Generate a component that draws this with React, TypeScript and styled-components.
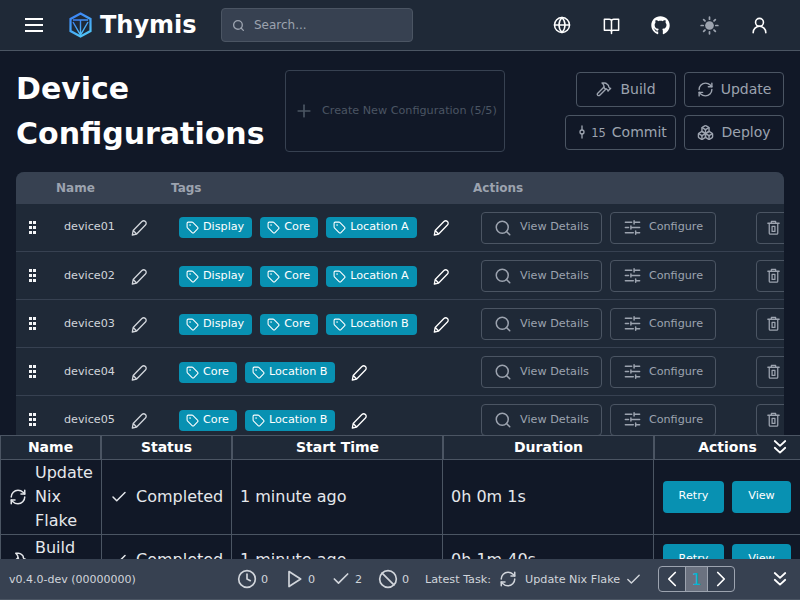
import React from 'react';
import styled, { createGlobalStyle } from 'styled-components';
import { Globe, UserRound, Hammer, RefreshCw, Boxes, GitCommitVertical, Tag, Search, Plus, Check, Clock, Ban, ChevronLeft, ChevronRight } from 'lucide-react';
import { FaGithub } from 'react-icons/fa';

const Global = createGlobalStyle`
  html, body { margin: 0; height: 100%; background: #111827; overflow: hidden; }
  * { box-sizing: border-box; }
  body { font-family: "DejaVu Sans", sans-serif; color: #fff; }
`;
const Page = styled.div`height: 600px; display: flex; flex-direction: column; overflow: hidden;`;
const Navbar = styled.header`
  height: 51px; flex: none; background: #1f2937; border-bottom: 1px solid #4b5563;
  display: flex; align-items: center; padding-left: 25px; padding-right: 31px;
`;
const Burger = styled.div`
  width: 18px; height: 14px; display: flex; flex-direction: column; justify-content: space-between; margin-right: 26px;
  span { height: 2px; background: #fff; }
`;
const Brand = styled.div`display: flex; align-items: center; gap: 8px; font-size: 24px; font-weight: 700; width: 152px;`;
const SearchBox = styled.div`
  width: 192px; height: 34px; background: #374151; border: 1px solid #4b5563; border-radius: 4px;
  display: flex; align-items: center; padding-left: 10px; gap: 9px; color: #9ca3af; font-size: 12px;
`;
const NavIcons = styled.div`margin-left: auto; display: flex; align-items: center; gap: 29.25px;`;
const NavIcon = styled.span<{ $muted?: boolean }>`display: flex; width: 20px; justify-content: center; color: ${p => p.$muted ? '#9ca3af' : '#fff'};`;
const Main = styled.main`flex: 1; min-height: 0; overflow: hidden; padding: 19px 16px 0;`;
const Head = styled.div`display: flex; align-items: flex-start; justify-content: space-between; margin-bottom: 20px; height: 82px;`;
const Title = styled.h1`margin: -4px 20px 0 0; font-size: 30px; line-height: 45px; font-weight: 700; width: 249px;`;
const CreateBox = styled.div`
  width: 220px; height: 82px; border: 1px solid #374151; border-radius: 4px; display: flex; align-items: center;
  padding-left: 8px; gap: 8px; color: #4b5563; font-size: 11.2px; white-space: nowrap; margin-right: auto;
`;
const CreateLabel = styled.span`padding-bottom: 2px;`;
const ActionGrid = styled.div`display: flex; flex-direction: column; gap: 8px; align-items: flex-end; padding-top: 2px;`;
const ActionRow = styled.div`display: flex; gap: 8px;`;
const OutlineBtn = styled.div<{ $w: number; $gap?: number }>`
  width: ${p => p.$w}px; height: 35px; border: 1px solid #4b5563; border-radius: 4px; display: flex; align-items: center; justify-content: center;
  gap: ${p => p.$gap ?? 8}px; color: #9ca3af; font-size: 14px; padding-bottom: 1px;
`;
const CommitCount = styled.span`font-size: 11.5px; margin-left: -7px; margin-right: -2px; padding-top: 2px;`;
const Table = styled.div`border-radius: 8px 8px 0 0; overflow: hidden; background: #1f2937;`;
const columns = '32px 115px 302px 1fr';
const HeaderRow = styled.div`
  display: grid; grid-template-columns: ${columns}; height: 32px; background: #374151; color: #9ca3af; font-size: 12px; font-weight: 700; align-items: center;
  & > span { padding-left: 8px; }
`;
const Row = styled.div`
  display: grid; grid-template-columns: ${columns}; height: 48px; border-bottom: 1px solid #374151; align-items: center;
`;
const Grip = styled.div`
  display: grid; grid-template-columns: 2.5px 2.5px; grid-template-rows: repeat(3, 2.5px); column-gap: 1.5px; row-gap: 2.5px; margin-left: 13px;
  i { background: #f3f4f6; display: block; }
`;
const Lifted = styled.span`padding-bottom: 2px;`;
const NameCell = styled.div<{ $first: boolean }>`
  display: flex; align-items: center; padding-left: 16px; padding-top: ${p => p.$first ? 0 : 2}px; font-size: 11.2px; color: #d1d5db; gap: 14px;
`;
const TagCell = styled.div<{ $first: boolean }>`
  display: flex; align-items: center; padding-left: 16px; padding-top: ${p => p.$first ? 0 : 2}px; gap: 8px;
`;
const TagChip = styled.span`
  height: 21px; background: #0891b2; border-radius: 4px; display: inline-flex; align-items: center; padding: 0 8px 0 7px; gap: 4px; font-size: 11.2px; color: #fff; white-space: nowrap;
`;
const EditBtn = styled.span`display: flex; color: #fff; margin-left: 6px;`;
const RowActions = styled.div`display: flex; align-items: center; padding-left: 16px; gap: 8px;`;
const RowBtn = styled.div<{ $w: number; $gap?: number }>`
  flex: none; width: ${p => p.$w}px; height: 32px; border: 1px solid #4b5563; border-radius: 4px; display: flex; align-items: center; justify-content: center;
  gap: ${p => p.$gap ?? 8}px; color: #9ca3af; font-size: 11.2px; white-space: nowrap;
`;
const BtnLabel = styled.span<{ $first: boolean }>`padding-bottom: ${p => p.$first ? 2 : 0}px;`;
const TrashBtn = styled(RowBtn)`margin-left: 32px;`;
const Tasks = styled.section`flex: none; height: 124px; overflow: hidden; background: #111827; border-top: 1px solid #4b5563;`;
const TaskHead = styled.div`
  display: grid; grid-template-columns: 102px 131px 211px 211px 145px; height: 24px; background: #1f2937; border-bottom: 1px solid #4b5563;
`;
const TaskHeadCell = styled.div`
  position: relative; display: flex; align-items: center; justify-content: center; font-size: 14px; font-weight: 700; border-right: 2px solid #4b5563; padding-bottom: 2px;
  &:first-child { border-left: 1px solid #4b5563; }
  &:last-child { border-right: none; }
`;
const Collapse = styled.span`position: absolute; right: 11px; top: 2px; display: flex; color: #fff;`;
const TaskRow = styled.div`display: grid; grid-template-columns: 102px 130px 211px 211px 146px; border-bottom: 1px solid #4b5563;`;
const TaskCell = styled.div`
  display: flex; align-items: center; border-right: 1px solid #4b5563; padding: 1px 8px; font-size: 16px; line-height: 24px; color: #e5e7eb; gap: 8px;
  &:first-child { border-left: 1px solid #4b5563; }
  &:last-child { border-right: none; padding-left: 9px; }
  & > svg { flex: none; }
`;
const TaskBtn = styled.div<{ $w: number }>`
  width: ${p => p.$w}px; height: 32px; background: #0891b2; border-radius: 4px; display: flex; align-items: center; justify-content: center; font-size: 11.2px; color: #fff; padding-bottom: 2px;
`;
const BtnRow = styled.div`display: flex; gap: 8px;`;
const StatusBar = styled.footer`
  flex: none; height: 41px; background: #374151; display: flex; align-items: center; padding-left: 9px; font-size: 11.2px; color: #d1d5db; border-bottom: 1px solid #4b5563;
  & svg { flex: none; }
`;
const Version = styled.span`width: 228px; font-size: 11px;`;
const Stat = styled.span<{ $w: number }>`display: flex; align-items: center; gap: 4px; width: ${p => p.$w}px; font-size: 11.2px; color: #d1d5db;`;
const Latest = styled.span`display: flex; align-items: center; gap: 8px; margin-left: 10px;`;
const LatestCheck = styled.span`display: flex; margin-left: -3px;`;
const Pager = styled.div`
  margin-left: 16px; display: flex; height: 26px; width: 77px; border: 1px solid #9ca3af; border-radius: 4px; overflow: hidden;
`;
const PageBtn = styled.span<{ $active?: boolean }>`
  flex: 1; display: flex; align-items: center; justify-content: center; color: ${p => p.$active ? '#06b6d4' : '#fff'}; font-size: 16px;
  background: ${p => p.$active ? '#6b7280' : 'transparent'}; border-left: ${p => p.$active ? '1px solid #9ca3af' : 'none'}; border-right: ${p => p.$active ? '1px solid #9ca3af' : 'none'};
`;
const FooterCollapse = styled.span`margin-left: auto; margin-right: 11px; display: flex; color: #fff;`;

const Logo = () => (
  <svg width="23" height="26" viewBox="0 0 23 26" fill="none">
    <defs><linearGradient id="lg" x1="0.2" y1="0" x2="0.6" y2="1"><stop offset="0" stopColor="#3b82f6" /><stop offset="1" stopColor="#4fc3f7" /></linearGradient></defs>
    <path d="M11.5 1.5 21.5 7v12l-10 5.5L1.5 19V7z" stroke="url(#lg)" strokeWidth="2.2" />
    <path d="M4 8h15M11.5 8v14M4 10l7.5 13L19 10" stroke="url(#lg)" strokeWidth="1.4" />
  </svg>
);
const Icon = ({ size = 16, w = 1.8, children }: { size?: number; w?: number; children: React.ReactNode }) => (
  <svg width={size} height={size} viewBox="0 0 24 24" fill="none" stroke="currentColor" strokeWidth={w} strokeLinecap="round" strokeLinejoin="round">{children}</svg>
);
const BookIcon = () => <Icon size={19} w={1.9}><path d="M3 4h6c1.5 0 3 .8 3 2.5C12 4.800 13.500 4 15 4h6v14h-7c-1 0-2 .5-2 1.500 0-1-1-1.500-2-1.500H3zM12 6.500V22" /></Icon>;
const SunIcon = () => <Icon size={19} w={2.2}><circle cx="12" cy="12" r="5.500" fill="currentColor" stroke="none" /><path d="M12 1.500v2.500M12 20v2.500M1.500 12H4M20 12h2.500M4.600 4.600l1.700 1.700M17.700 17.700l1.700 1.700M4.600 19.400l1.700-1.700M17.700 6.300l1.700-1.700" /></Icon>;
const PenIcon = () => <Icon size={20} w={1.6}><path d="M4 20.500l1-5.500L15.500 4.300c1.200-1.200 3-1.200 4.200 0s1.200 3 0 4.200L9.200 19.200zM5 15l4.200 4.200" /></Icon>;
const SlidersIcon = () => <Icon size={19} w={1.900}><path d="M3 5.500h8M14 3.500v4M14 5.500h7M3 12h4M10 10v4M10 12h11M3 18.500h10M16 16.500v4M16 18.500h5" /></Icon>;
const TrashIcon = () => <Icon size={17} w={1.800}><path d="M4 6h16M9 6V3.500h6V6M6 6v14a1.500 1.500 0 0 0 1.500 1.500h9A1.500 1.500 0 0 0 18 20V6M10 10.500v7h4v-7z" /></Icon>;
const PlayIcon = () => <Icon size={20} w={2}><path d="M6 3l14 9-14 9z" /></Icon>;
const DoubleDown = () => <Icon size={18} w={2.4}><path d="M5 4l7 6.500L19 4M5 13l7 6.500 7-6.500" /></Icon>;

const devices = [
  ['device01', ['Display', 'Core', 'Location A']],
  ['device02', ['Display', 'Core', 'Location A']],
  ['device03', ['Display', 'Core', 'Location B']],
  ['device04', ['Core', 'Location B']],
  ['device05', ['Core', 'Location B']],
] as const;

const tasks = [
  { icon: <RefreshCw size={18} />, name: 'Update Nix Flake', dur: '0h 0m 1s' },
  { icon: <Hammer size={18} />, name: 'Build Project', dur: '0h 1m 40s' },
];

export default function App() {
  return (
    <Page>
      <Global />
      <Navbar>
        <Burger><span /><span /><span /></Burger>
        <Brand><Logo />Thymis</Brand>
        <SearchBox><Search size={13} strokeWidth={2.5} />Search...</SearchBox>
        <NavIcons>
          <NavIcon><Globe size={18} /></NavIcon>
          <NavIcon><BookIcon /></NavIcon>
          <NavIcon><FaGithub size={19} /></NavIcon>
          <NavIcon $muted><SunIcon /></NavIcon>
          <NavIcon><UserRound size={19} /></NavIcon>
        </NavIcons>
      </Navbar>
      <Main>
        <Head>
          <Title>Device Configurations</Title>
          <CreateBox><Plus size={20} /><CreateLabel>Create New Configuration (5/5)</CreateLabel></CreateBox>
          <ActionGrid>
            <ActionRow>
              <OutlineBtn $w={100}><Hammer size={16} />Build</OutlineBtn>
              <OutlineBtn $w={100} $gap={7}><RefreshCw size={17} />Update</OutlineBtn>
            </ActionRow>
            <ActionRow>
              <OutlineBtn $w={111}><GitCommitVertical size={16} /><CommitCount>15</CommitCount>Commit</OutlineBtn>
              <OutlineBtn $w={100} $gap={7}><Boxes size={17} />Deploy</OutlineBtn>
            </ActionRow>
          </ActionGrid>
        </Head>
        <Table>
          <HeaderRow><span /><span>Name</span><span>Tags</span><span>Actions</span></HeaderRow>
          {devices.map(([name, tags], i) => (
            <Row key={name}>
              <Grip><i /><i /><i /><i /><i /><i /></Grip>
              <NameCell $first={i === 0}><Lifted>{name}</Lifted><PenIcon /></NameCell>
              <TagCell $first={i === 0}>
                {tags.map(t => <TagChip key={t}><Tag size={13} /><Lifted>{t}</Lifted></TagChip>)}
                <EditBtn><PenIcon /></EditBtn>
              </TagCell>
              <RowActions>
                <RowBtn $w={121}><Search size={18} /><BtnLabel $first={i === 0}>View Details</BtnLabel></RowBtn>
                <RowBtn $w={106} $gap={7}><SlidersIcon /><BtnLabel $first={i === 0}>Configure</BtnLabel></RowBtn>
                <TrashBtn $w={34}><TrashIcon /></TrashBtn>
              </RowActions>
            </Row>
          ))}
        </Table>
      </Main>
      <Tasks>
        <TaskHead>
          <TaskHeadCell>Name</TaskHeadCell>
          <TaskHeadCell>Status</TaskHeadCell>
          <TaskHeadCell>Start Time</TaskHeadCell>
          <TaskHeadCell>Duration</TaskHeadCell>
          <TaskHeadCell>Actions<Collapse><DoubleDown /></Collapse></TaskHeadCell>
        </TaskHead>
        {tasks.map(t => (
          <TaskRow key={t.name}>
            <TaskCell>{t.icon}<span>{t.name}</span></TaskCell>
            <TaskCell><Check size={18} />Completed</TaskCell>
            <TaskCell>1 minute ago</TaskCell>
            <TaskCell>{t.dur}</TaskCell>
            <TaskCell><BtnRow><TaskBtn $w={61}>Retry</TaskBtn><TaskBtn $w={59}>View</TaskBtn></BtnRow></TaskCell>
          </TaskRow>
        ))}
      </Tasks>
      <StatusBar>
        <Version>v0.4.0-dev (00000000)</Version>
        <Stat $w={47}><Clock size={20} />0</Stat>
        <Stat $w={47}><PlayIcon />0</Stat>
        <Stat $w={47}><Check size={20} />2</Stat>
        <Stat $w={37}><Ban size={20} />0</Stat>
        <Latest>Latest Task:<RefreshCw size={18} />Update Nix Flake<LatestCheck><Check size={17} /></LatestCheck></Latest>
        <Pager>
          <PageBtn><ChevronLeft size={26} strokeWidth={1.6} /></PageBtn>
          <PageBtn $active>1</PageBtn>
          <PageBtn><ChevronRight size={26} strokeWidth={1.6} /></PageBtn>
        </Pager>
        <FooterCollapse><DoubleDown /></FooterCollapse>
      </StatusBar>
    </Page>
  );
}
